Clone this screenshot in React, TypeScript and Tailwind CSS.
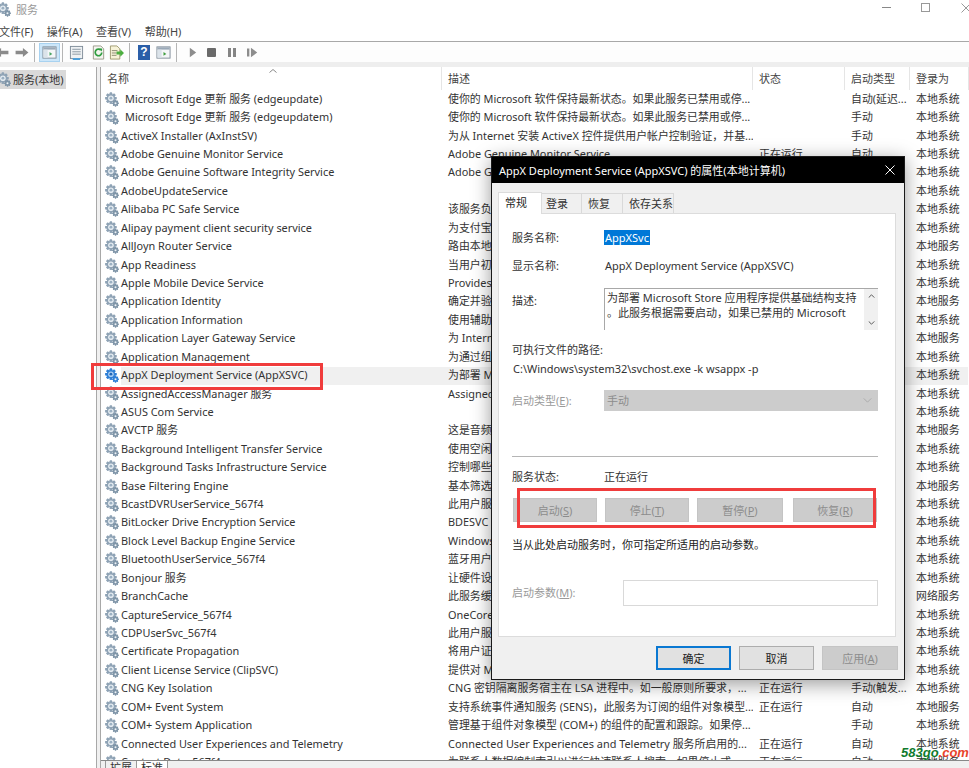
const FONT = "font-['Noto_Sans','Noto_Sans_CJK_SC',sans-serif]";

type Row = { n: string; d: string; s?: string; t: string; l: string; x?: boolean };
const SYS = "本地系统";
const SVC = "本地服务";
const rows: Row[] = [
  { n: "Microsoft Edge 更新 服务 (edgeupdate)", d: "使你的 Microsoft 软件保持最新状态。如果此服务已禁用或停...", t: "自动(延迟...", l: SYS, x: true },
  { n: "Microsoft Edge 更新 服务 (edgeupdatem)", d: "使你的 Microsoft 软件保持最新状态。如果此服务已禁用或停...", t: "手动", l: SYS, x: true },
  { n: "ActiveX Installer (AxInstSV)", d: "为从 Internet 安装 ActiveX 控件提供用户帐户控制验证，并基...", t: "手动", l: SYS },
  { n: "Adobe Genuine Monitor Service", d: "Adobe Genuine Monitor Service", s: "正在运行", t: "自动", l: SYS },
  { n: "Adobe Genuine Software Integrity Service", d: "Adobe Genuine Software", t: "", l: SYS },
  { n: "AdobeUpdateService", d: "", t: "", l: SYS },
  { n: "Alibaba PC Safe Service", d: "该服务负责", t: "", l: SYS },
  { n: "Alipay payment client security service", d: "为支付宝", t: "", l: SYS },
  { n: "AllJoyn Router Service", d: "路由本地", t: "", l: SVC },
  { n: "App Readiness", d: "当用户初", t: "", l: SYS },
  { n: "Apple Mobile Device Service", d: "Provides", t: "", l: SYS },
  { n: "Application Identity", d: "确定并验", t: "", l: SVC },
  { n: "Application Information", d: "使用辅助", t: "", l: SYS },
  { n: "Application Layer Gateway Service", d: "为 Intern", t: "", l: SVC },
  { n: "Application Management", d: "为通过组", t: "", l: SYS },
  { n: "AppX Deployment Service (AppXSVC)", d: "为部署 M", t: "", l: SYS },
  { n: "AssignedAccessManager 服务", d: "Assigned", t: "", l: SYS },
  { n: "ASUS Com Service", d: "", t: "", l: SYS },
  { n: "AVCTP 服务", d: "这是音频", t: "", l: SVC },
  { n: "Background Intelligent Transfer Service", d: "使用空闲", t: "", l: SYS },
  { n: "Background Tasks Infrastructure Service", d: "控制哪些", t: "", l: SYS },
  { n: "Base Filtering Engine", d: "基本筛选", t: "", l: SVC },
  { n: "BcastDVRUserService_567f4", d: "此用户服", t: "", l: SYS },
  { n: "BitLocker Drive Encryption Service", d: "BDESVC", t: "", l: SYS },
  { n: "Block Level Backup Engine Service", d: "Windows", t: "", l: SYS },
  { n: "BluetoothUserService_567f4", d: "蓝牙用户", t: "", l: SYS },
  { n: "Bonjour 服务", d: "让硬件设", t: "", l: SYS },
  { n: "BranchCache", d: "此服务缓", t: "", l: "网络服务" },
  { n: "CaptureService_567f4", d: "OneCore", t: "", l: SYS },
  { n: "CDPUserSvc_567f4", d: "此用户服", t: "", l: SYS },
  { n: "Certificate Propagation", d: "将用户证", t: "", l: SYS },
  { n: "Client License Service (ClipSVC)", d: "提供对 M", t: "", l: SYS },
  { n: "CNG Key Isolation", d: "CNG 密钥隔离服务宿主在 LSA 进程中。如一般原则所要求，...", s: "正在运行", t: "手动(触发...", l: SYS },
  { n: "COM+ Event System", d: "支持系统事件通知服务 (SENS)，此服务为订阅的组件对象模型...", s: "正在运行", t: "自动", l: SVC },
  { n: "COM+ System Application", d: "管理基于组件对象模型 (COM+) 的组件的配置和跟踪。如果停...", t: "手动", l: SYS },
  { n: "Connected User Experiences and Telemetry", d: "Connected User Experiences and Telemetry 服务所启用的...", s: "正在运行", t: "自动", l: SYS },
  { n: "Contact Data_567f4", d: "为联系人数据编制索引以进行快速联系人搜索。如果停止或...", s: "正在运行", t: "自动", l: SVC },
];

function Gear({ blue = false, className = "" }: { blue?: boolean; className?: string }) {
  const a = blue ? "#2f7fd6" : "#8fa3b5";
  const b = blue ? "#a9cdf2" : "#e4ebf1";
  const teeth = [0, 45, 90, 135, 180, 225, 270, 315];
  return (
    <svg viewBox="0 0 16 16" className={className}>
      <g>
        {teeth.map((r) => (
          <rect key={r} x="5" y="0.6" width="2.6" height="12" rx="0.6" fill={a} transform={`rotate(${r} 6.3 6.6)`} />
        ))}
        <circle cx="6.3" cy="6.6" r="4.4" fill={a} />
        <circle cx="6.3" cy="6.6" r="3" fill={b} />
        <circle cx="6.3" cy="6.6" r="1.5" fill={blue ? "#1f66b8" : "#9bb0c2"} />
      </g>
      <g>
        {teeth.map((r) => (
          <rect key={r} x="10.4" y="8.6" width="1.6" height="6.8" rx="0.4" fill={blue ? "#2f7fd6" : "#7f95a8"} transform={`rotate(${r} 11.2 12)`} />
        ))}
        <circle cx="11.2" cy="12" r="2.5" fill={blue ? "#2f7fd6" : "#7f95a8"} />
        <circle cx="11.2" cy="12" r="1.1" fill="#eef3f7" />
      </g>
    </svg>
  );
}

function Sep() {
  return <div className="h-[19px] w-px bg-[#b5b5b5]" />;
}

function PanelIcon({ tint = "#4aa564" }: { tint?: string }) {
  return (
    <svg viewBox="0 0 16 16" className="h-[15px] w-[15px]">
      <rect x="1" y="2" width="14" height="12" fill="#f4f6f8" stroke="#7f8c99" />
      <rect x="1.5" y="2.5" width="13" height="2.4" fill="#9aa9b8" />
      <rect x="1.5" y="5" width="4.5" height="8.5" fill="#dbe3ea" />
      <path d="M8 7.5v4l3-2z" fill={tint} />
    </svg>
  );
}

function Toolbar() {
  return (
    <div className="flex h-[20px] shrink-0 items-center bg-[#fdfdfd]">
      <svg viewBox="0 0 14 12" className="-ml-[5px] h-[11px] w-[14px] shrink-0">
        <path d="M0 6l6-5v3h8v4H6v3z" fill="#8a8a8a" />
      </svg>
      <svg viewBox="0 0 14 12" className="ml-[6px] h-[11px] w-[14px] shrink-0">
        <path d="M14 6L8 1v3H0v4h8v3z" fill="#8a8a8a" />
      </svg>
      <div className="ml-[5px]"><Sep /></div>
      <div className="ml-[4px] flex h-[19px] w-[21px] items-center justify-center border border-[#a8d2f0] bg-[#cce6f9]">
        <PanelIcon />
      </div>
      <div className="ml-[2px]"><Sep /></div>
      <svg viewBox="0 0 16 16" className="ml-[6px] h-[15px] w-[15px]">
        <rect x="1.5" y="1.5" width="13" height="13" fill="#eef1f3" stroke="#7f8c99" />
        <rect x="3.5" y="4" width="9" height="1.2" fill="#9aa5af" />
        <rect x="3.5" y="6.6" width="9" height="1.2" fill="#9aa5af" />
        <rect x="3.5" y="9.2" width="9" height="1.2" fill="#9aa5af" />
        <rect x="4" y="14" width="8" height="2" fill="#4b9fdc" />
      </svg>
      <svg viewBox="0 0 16 16" className="ml-[7px] h-[15px] w-[15px]">
        <path d="M2.5 1h8l3 3v11h-11z" fill="#f5f5f0" stroke="#9a9a8a" />
        <path d="M11.5 8a3.5 3.5 0 1 1-1-2.5" fill="none" stroke="#2f9d3f" strokeWidth="1.8" />
        <path d="M9 3.6l3 .2-.4 3z" fill="#2f9d3f" />
      </svg>
      <svg viewBox="0 0 16 16" className="ml-[3px] h-[15px] w-[15px]">
        <path d="M1.5 1h7l3 3v11h-10z" fill="#f7f3d8" stroke="#a09a70" />
        <rect x="3" y="5.5" width="6" height="1" fill="#8a8a70" />
        <rect x="3" y="8" width="5" height="1" fill="#8a8a70" />
        <rect x="3" y="10.5" width="5" height="1" fill="#8a8a70" />
        <path d="M8 7h4V4.5l4 4-4 4V10H8z" fill="#4cae3f" />
      </svg>
      <div className="ml-[5px]"><Sep /></div>
      <div className="ml-[8px] flex h-[15px] w-[12px] items-center justify-center bg-[#2a5ea8] font-['Liberation_Sans'] text-[12px] font-bold leading-none text-white">?</div>
      <div className="ml-[6px]"><PanelIcon tint="#3f9d3f" /></div>
      <div className="ml-[5px]"><Sep /></div>
      <svg viewBox="0 0 10 12" className="ml-[12px] h-[11px] w-[8px]"><path d="M1 0l8 6-8 6z" fill="#8d8d8d" /></svg>
      <div className="ml-[10px] h-[9px] w-[9px] rounded-[1px] bg-[#6a6a6a]" />
      <div className="ml-[12px] flex gap-[2px]"><div className="h-[9px] w-[3px] bg-[#858585]" /><div className="h-[9px] w-[3px] bg-[#858585]" /></div>
      <svg viewBox="0 0 14 12" className="ml-[11px] h-[11px] w-[11px]"><path d="M0 1h3v10H0zM5 0l8 6-8 6z" fill="#8d8d8d" /></svg>
    </div>
  );
}

function HeaderCell({ w, children, grow = false }: { w?: string; children: React.ReactNode; grow?: boolean }) {
  return <div className={`h-full shrink-0 border-r border-[#e5e5e5] pl-[6px] leading-[24px] text-[#444] ${w ?? ""} ${grow ? "flex-1" : ""}`}>{children}</div>;
}

function ListRow({ r }: { r: Row }) {
  const hl = r.n.startsWith("AppX");
  const bg = hl ? "bg-[#f0f0f0]" : "";
  return (
    <div className="flex h-[18.43px] shrink-0 items-center whitespace-nowrap text-[10.9px] text-[#333]">
      <div className="flex w-[341px] shrink-0 items-center overflow-hidden pl-[4px]">
        <Gear blue={hl} className="h-[15px] w-[15px] shrink-0" />
        <span className={`ml-[1px] flex h-[18px] items-center ${r.x ? "pl-[4px]" : ""} ${hl ? "w-[321px]" : ""} ${bg}`}>{r.n}</span>
      </div>
      <div className={`flex h-[18px] w-[311px] shrink-0 items-center overflow-hidden pl-[6px] ${bg}`}>{r.d}</div>
      <div className={`flex h-[18px] w-[92px] shrink-0 items-center pl-[6px] ${bg}`}>{r.s}</div>
      <div className={`flex h-[18px] w-[65px] shrink-0 items-center overflow-hidden pl-[6px] ${bg}`}>{r.t}</div>
      <div className={`flex h-[18px] w-[58px] shrink-0 items-center pl-[6px] ${bg}`}>{r.l}</div>
    </div>
  );
}

function DisabledBtn({ w, children }: { w: string; children: React.ReactNode }) {
  return (
    <div className={`flex h-[24px] ${w} items-center justify-center border border-[#c4c4c4] bg-[#cccccc] text-[#8c8c8c]`}>{children}</div>
  );
}

function Dialog() {
  return (
    <div className="absolute left-[491px] top-[156px] flex h-[524px] w-[414px] flex-col border border-[#1a1a1a] bg-[#f0f0f0] shadow-[0_4px_18px_rgba(0,0,0,0.4)]">
      <div className="flex h-[26px] shrink-0 items-center justify-between bg-black pl-[7px] pr-[9px] text-white">
        <span>AppX Deployment Service (AppXSVC) 的属性(本地计算机)</span>
        <svg viewBox="0 0 10 10" className="h-[10px] w-[10px]"><path d="M0.5 0.5l9 9M9.5 0.5l-9 9" stroke="#fff" strokeWidth="1" /></svg>
      </div>
      <div className="flex h-[30px] shrink-0 items-end pl-[6px]">
        <div className="z-10 -mb-px flex h-[22px] w-[44px] items-center border border-b-0 border-[#dcdcdc] bg-white pb-[2px] pl-[6px] text-[#222]">常规</div>
        <div className="flex h-[20px] w-[40px] items-center border border-b-0 border-l-0 border-[#d9d9d9] bg-[#f0f0f0] pl-[4px]">登录</div>
        <div className="flex h-[20px] w-[41px] items-center border border-b-0 border-l-0 border-[#d9d9d9] bg-[#f0f0f0] pl-[6px]">恢复</div>
        <div className="flex h-[20px] w-[51px] items-center border border-b-0 border-l-0 border-[#d9d9d9] bg-[#f0f0f0] pl-[6px]">依存关系</div>
      </div>
      <div className="ml-[6px] flex h-[424px] w-[398px] shrink-0 flex-col border border-[#dcdcdc] bg-white pl-[13px] pr-[17px] text-[#333]">
        <div className="mt-[14px] flex h-[18px] items-center">
          <span className="w-[92px]">服务名称:</span>
          <span className="bg-[#0078d7] px-[1px] py-[2px] text-white">AppXSvc</span>
        </div>
        <div className="mt-[10px] flex h-[18px] items-center">
          <span className="w-[93px]">显示名称:</span>
          <span>AppX Deployment Service (AppXSVC)</span>
        </div>
        <div className="mt-[14px] flex items-start">
          <span className="mt-[7px] w-[92px]">描述:</span>
          <div className="flex h-[42px] flex-1 border-l border-t border-[#a8a8a8]">
            <div className="flex-1 overflow-hidden whitespace-nowrap pl-[2px] pt-[1px] leading-[15px]">
              为部署 Microsoft Store 应用程序提供基础结构支持<br />。此服务根据需要启动，如果已禁用的 Microsoft
            </div>
            <div className="flex w-[14px] flex-col items-center justify-between bg-[#f0f0f0] py-[5px]">
              <svg viewBox="0 0 8 5" className="h-[4px] w-[7px]"><path d="M0.5 4.5L4 1l3.5 3.5" fill="none" stroke="#555" strokeWidth="1.2" /></svg>
              <svg viewBox="0 0 8 5" className="h-[4px] w-[7px]"><path d="M0.5 0.5L4 4l3.5-3.5" fill="none" stroke="#555" strokeWidth="1.2" /></svg>
            </div>
          </div>
        </div>
        <div className="mt-[11px] h-[18px] leading-[18px]">可执行文件的路径:</div>
        <div className="mt-[1px] h-[18px] pl-[1px] leading-[18px]">{"C:\\Windows\\system32\\svchost.exe -k wsappx -p"}</div>
        <div className="mt-[12px] flex h-[21px] items-center">
          <span className="w-[92px] text-[#9a9a9a]">启动类型(<u>E</u>):</span>
          <div className="flex h-[21px] flex-1 items-center justify-between bg-[#cccccc] pl-[3px] pr-[6px] text-[#8c8c8c]">
            <span>手动</span>
            <svg viewBox="0 0 10 6" className="h-[5px] w-[9px]"><path d="M0.5 0.5L5 5l4.5-4.5" fill="none" stroke="#aaa" strokeWidth="1.1" /></svg>
          </div>
        </div>
        <div className="mt-[45px] h-px shrink-0 bg-[#b5b5b5]" />
        <div className="mt-[10px] flex h-[18px] items-center">
          <span className="w-[92px]">服务状态:</span>
          <span>正在运行</span>
        </div>
        <div className="mt-[13px] ml-[1px] flex">
          <DisabledBtn w="w-[84px]"><span>启动(<u>S</u>)</span></DisabledBtn>
          <div className="ml-[8px]"><DisabledBtn w="w-[84px]"><span>停止(<u>T</u>)</span></DisabledBtn></div>
          <div className="ml-[8px]"><DisabledBtn w="w-[86px]"><span>暂停(<u>P</u>)</span></DisabledBtn></div>
          <div className="ml-[10px]"><DisabledBtn w="w-[84px]"><span>恢复(<u>R</u>)</span></DisabledBtn></div>
        </div>
        <div className="mt-[14px] h-[18px] leading-[18px] text-[#222]">当从此处启动服务时，你可指定所适用的启动参数。</div>
        <div className="mt-[26px] flex h-[26px] items-center">
          <span className="w-[111px] pb-[2px] text-[#9a9a9a]">启动参数(<u>M</u>):</span>
          <div className="h-[26px] flex-1 border border-[#d9d9d9] bg-white" />
        </div>
      </div>
      <div className="flex flex-1 items-start justify-end gap-[8px] pr-[6px] pt-[9px]">
        <div className="flex h-[24px] w-[75px] items-center justify-center border-2 border-[#0a78d2] bg-[#e1e1e1] text-[#222]">确定</div>
        <div className="flex h-[24px] w-[75px] items-center justify-center border border-[#adadad] bg-[#e1e1e1] text-[#222]">取消</div>
        <div className="flex h-[24px] w-[76px] items-center justify-center border border-[#c4c4c4] bg-[#cccccc] text-[#8c8c8c]"><span>应用(<u>A</u>)</span></div>
      </div>
    </div>
  );
}

export default function App() {
  return (
    <div className={`relative flex h-[768px] w-[969px] flex-col overflow-hidden bg-white text-[11px] leading-none text-[#333] ${FONT}`}>
      <div className="flex h-[18px] shrink-0 items-center text-[11px] text-[#999]">
        <Gear className="-ml-[3px] h-[15px] w-[15px]" />
        <span className="ml-[4px]">服务</span>
        <div className="-mr-[2px] ml-auto flex items-center pb-[3px]">
          <div className="h-px w-[9px] bg-[#888]" />
          <div className="ml-[30px] h-[9px] w-[9px] border border-[#999]" />
          <svg viewBox="0 0 10 10" className="ml-[31px] h-[10px] w-[10px]"><path d="M0.5 0.5l9 9M9.5 0.5l-9 9" stroke="#999" strokeWidth="1" /></svg>
        </div>
      </div>
      <div className="flex h-[23px] shrink-0 items-center gap-[13.5px] pt-[3px] text-[#444]">
        <span className="-ml-[1px]">文件(F)</span>
        <span>操作(A)</span>
        <span>查看(V)</span>
        <span>帮助(H)</span>
      </div>
      <div className="h-px shrink-0 bg-[#a8a8a8]" />
      <Toolbar />
      <div className="h-[5px] shrink-0 bg-[#eeeeee]" />
      <div className="flex min-h-0 flex-1">
        <div className="flex w-[97px] shrink-0 flex-col border-r border-[#a8a8a8] pt-[3px]">
          <div className="flex h-[19px] w-[66px] items-center bg-[#d9d9d9]">
            <Gear className="-ml-[3px] h-[15px] w-[15px]" />
            <span className="ml-[1px] text-[#333]">服务(本地)</span>
          </div>
        </div>
        <div className="w-[3px] shrink-0 bg-[#f0f0f0]" />
        <div className="flex min-w-0 flex-1 flex-col border-l border-[#a8a8a8]">
          <div className="relative flex h-[23px] shrink-0 items-center">
            <svg viewBox="0 0 8 4" className="absolute left-[168px] top-[2px] h-[4px] w-[8px]"><path d="M0.5 3.5L4 0.5l3.5 3" fill="none" stroke="#888" /></svg>
            <HeaderCell w="w-[341px]">名称</HeaderCell>
            <HeaderCell w="w-[311px]">描述</HeaderCell>
            <HeaderCell w="w-[92px]">状态</HeaderCell>
            <HeaderCell w="w-[65px]">启动类型</HeaderCell>
            <HeaderCell grow>登录为</HeaderCell>
          </div>
          <div className="flex min-h-0 flex-1 flex-col overflow-hidden">
            {rows.map((r) => <ListRow key={r.n} r={r} />)}
          </div>
          <div className="h-[1px] shrink-0 bg-[#888]" />
          <div className="flex h-[7px] shrink-0 items-start overflow-hidden bg-[#f0f0f0] pl-[4px] text-[#333]">
            <span className="h-[12px] border-x border-[#999] px-[4px] pt-[1px]">扩展</span>
            <span className="h-[12px] border-r border-[#999] bg-white px-[4px] pt-[1px]">标准</span>
          </div>
        </div>
      </div>
      <Dialog />
      <div className="absolute left-[91px] top-[363px] h-[27px] w-[232px] border-[3px] border-[#f03c3c]" />
      <div className="absolute left-[517px] top-[488px] h-[40px] w-[359px] border-[3px] border-[#f03c3c]" />
      <div className="absolute left-[901px] top-[746px] font-['Liberation_Sans'] text-[13px] font-bold italic leading-none">
        <span className="text-[#0f7a2c]">583go</span><span className="text-[#e8442c]">.com</span>
      </div>
    </div>
  );
}
